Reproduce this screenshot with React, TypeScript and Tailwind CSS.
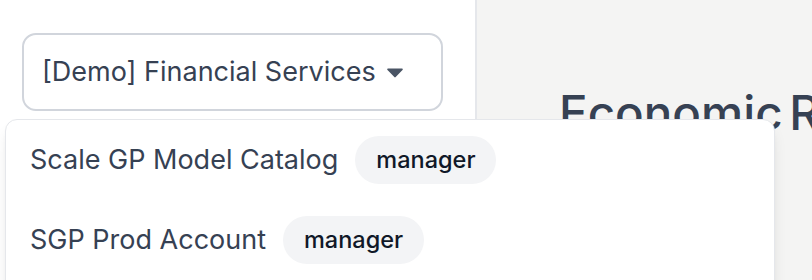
const accounts = [
  { name: 'Scale GP Model Catalog', role: 'manager' },
  { name: 'SGP Prod Account', role: 'manager' },
];

export default function App() {
  return (
    <div className="relative flex h-[280px] w-[812px] overflow-hidden font-['Inter',sans-serif]">
      <aside className="w-[477px] shrink-0 border-r-2 border-gray-200 bg-white pl-[22px] pt-[33px]">
        <button className="flex h-[78px] w-[421px] items-center gap-[11px] rounded-[14px] border-2 border-gray-300 bg-white pl-[18px] text-[27px] text-gray-700">
          <span>[Demo] Financial Services</span>
          <svg viewBox="0 0 16 10" className="mt-[2px] h-[10px] w-[16px] text-gray-600" fill="currentColor">
            <path d="M1.2 0.5h13.6c0.9 0 1.3 1 0.7 1.6L8.7 9.1a1 1 0 0 1-1.4 0L0.5 2.1C-0.1 1.5 0.3 0.5 1.2 0.5z" />
          </svg>
        </button>
      </aside>

      <main className="min-w-0 flex-1 bg-[#f4f4f3] pl-[82px] pt-[89px]">
        <h1 className="whitespace-nowrap text-[47.5px] font-medium leading-none text-gray-700 [word-spacing:-6px]">Economic Research</h1>
      </main>

      <div className="absolute left-[5px] top-[119px] h-[200px] w-[770px] rounded-[12px] border border-gray-200 bg-white shadow-lg">
        {accounts.map((account) => (
          <div key={account.name} className="flex h-[80px] items-center gap-[17px] pl-[24px]">
            <span className="text-[27px] text-gray-700">{account.name}</span>
            <span className="flex h-[48px] items-center rounded-full bg-gray-100 px-[21px] text-[23.5px] font-medium text-gray-900">
              {account.role}
            </span>
          </div>
        ))}
      </div>
    </div>
  );
}
